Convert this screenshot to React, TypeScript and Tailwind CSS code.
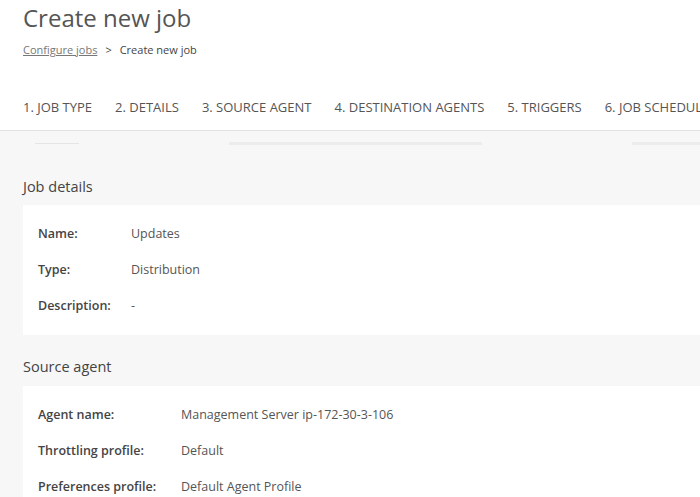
const tabs = ['1. JOB TYPE', '2. DETAILS', '3. SOURCE AGENT', '4. DESTINATION AGENTS', '5. TRIGGERS', '6. JOB SCHEDULE']

function Row({ label, value, w }: { label: string; value: string; w: string }) {
  return (
    <div className="flex h-[36px] items-center text-[12.5px]">
      <div className={`${w} font-semibold text-[#444]`}>{label}</div>
      <div className="text-[#555]">{value}</div>
    </div>
  )
}

export default function App() {
  return (
    <div className="h-[497px] w-[700px] overflow-hidden bg-[#f7f7f8]" style={{ fontFamily: '"Open Sans", sans-serif' }}>
      <div className="bg-white">
        <h1 className="pl-[23px] pt-[3px] text-[24px] leading-[30px] text-[#555]">Create new job</h1>
        <div className="mt-[9px] flex items-center gap-[8px] pl-[23px] text-[11px] text-[#444]">
          <span className="text-[#777] underline">Configure jobs</span>
          <span>&gt;</span>
          <span>Create new job</span>
        </div>
        <div className="mt-[28px] flex h-[44px] items-center gap-[23px] whitespace-nowrap border-b border-[#e3e3e3] pl-[23px] text-[13px] text-[#555]">
          {tabs.map(t => (
            <span key={t}>{t}</span>
          ))}
        </div>
      </div>
      <div className="flex h-[26px] items-center gap-[50px] pl-[35px]">
        <div className="h-px w-[45px] bg-[#e5e5e5]" />
        <div className="ml-[100px] h-[3px] w-[260px] bg-[#ececec]" />
        <div className="ml-[100px] h-[3px] w-[70px] bg-[#ececec]" />
      </div>
      <div className="pl-[23px]">
        <h2 className="mt-[19px] text-[14.5px] text-[#444]">Job details</h2>
        <div className="mt-[8px] bg-white py-[11px] pl-[15px]">
          <Row label="Name:" value="Updates" w="w-[93px]" />
          <Row label="Type:" value="Distribution" w="w-[93px]" />
          <Row label="Description:" value="-" w="w-[93px]" />
        </div>
        <h2 className="mt-[21px] text-[14.5px] text-[#444]">Source agent</h2>
        <div className="mt-[8px] bg-white py-[11px] pl-[15px]">
          <Row label="Agent name:" value="Management Server ip-172-30-3-106" w="w-[143px]" />
          <Row label="Throttling profile:" value="Default" w="w-[143px]" />
          <Row label="Preferences profile:" value="Default Agent Profile" w="w-[143px]" />
        </div>
      </div>
    </div>
  )
}
